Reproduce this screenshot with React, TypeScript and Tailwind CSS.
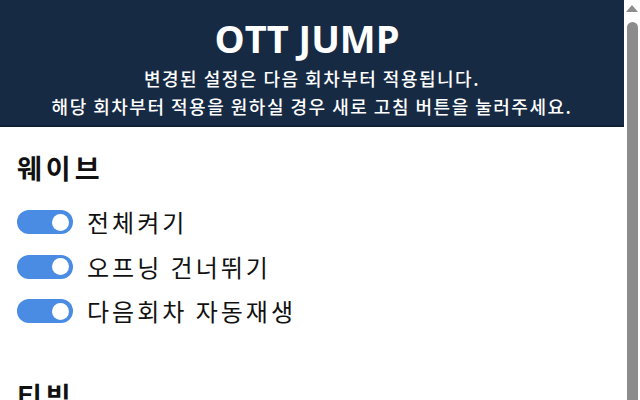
import React from "react";

const Toggle = () => (
  <div className="w-[56px] h-[24px] rounded-full bg-[#4a8be4] flex items-center justify-end pr-[4px] shrink-0">
    <div className="w-[17px] h-[17px] rounded-full bg-white" />
  </div>
);

const Row = ({ label }: { label: string }) => (
  <div className="flex items-center gap-[14px] h-[44.5px]">
    <Toggle />
    <span className="text-[24px] tracking-[3px] text-[#111] leading-none">{label}</span>
  </div>
);

export default function App() {
  return (
    <div
      className="w-[640px] h-[400px] overflow-hidden bg-white flex"
      style={{ fontFamily: '"Noto Sans CJK KR", "Noto Sans", sans-serif' }}
    >
      <div className="w-[624px] shrink-0 flex flex-col">
        <div className="h-[127px] shrink-0 bg-[#172a44] border-b-2 border-[#0f1f36] flex flex-col items-center pt-[12px] text-white">
          <div
            className="text-[38px] font-bold leading-[52px] pr-[10px]"
            style={{ fontFamily: '"Open Sans", sans-serif' }}
          >
            OTT JUMP
          </div>
          <div className="text-[18px] font-medium tracking-[1.5px] leading-[28px] text-center">
            변경된 설정은 다음 회차부터 적용됩니다.
            <br />
            해당 회차부터 적용을 원하실 경우 새로 고침 버튼을 눌러주세요.
          </div>
        </div>
        <div className="pl-[17px] pt-[23px] shrink-0">
          <div className="text-[27px] tracking-[4px] font-bold leading-[36px] text-[#111]">웨이브</div>
          <div className="mt-[14px] flex flex-col">
            <Row label="전체켜기" />
            <Row label="오프닝 건너뛰기" />
            <Row label="다음회차 자동재생" />
          </div>
          <div className="mt-[44px] text-[27px] tracking-[4px] font-bold leading-[36px] text-[#111]">티빙</div>
        </div>
      </div>
      <div className="w-[16px] shrink-0 flex flex-col items-center pt-[5px]">
        <svg width="12" height="8" viewBox="0 0 12 8">
          <path d="M6 0 L12 7 L0 7 Z" fill="#8c8c8c" />
        </svg>
        <div className="mt-[9px] w-[11px] flex-1 rounded-t-[6px] bg-[#8c8c8c]" />
      </div>
    </div>
  );
}
